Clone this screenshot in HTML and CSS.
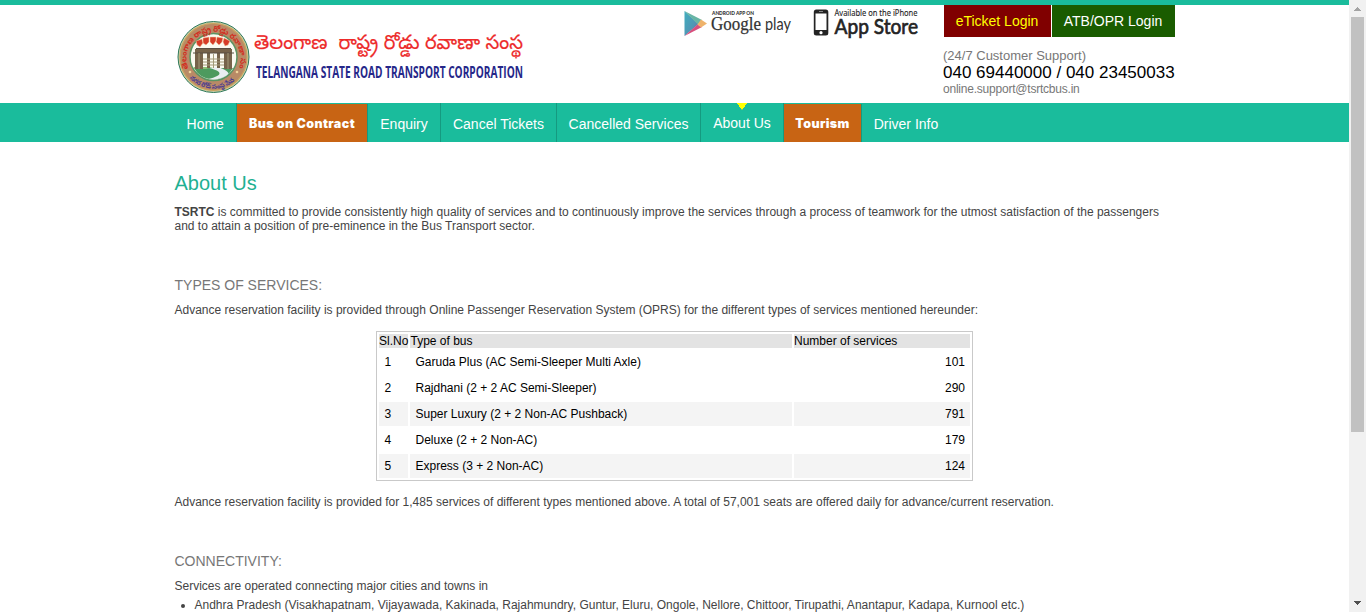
FILE: index.html
```html
<!DOCTYPE html>
<html lang="en">
<head>
<meta charset="utf-8">
<title>TSRTC - About Us</title>
<link rel="stylesheet" href="styles.css">
</head>
<body>
<div class="page">
  <header class="header">
    <div class="wrap header-row">
      <svg class="logo" viewBox="175 15 355 85" width="355" height="85">
        <circle cx="213.500" cy="57" r="35.500" fill="#c9cba3" stroke="#2f7a5c" stroke-width="1"/>
        <circle cx="213.500" cy="57" r="33.500" fill="#b98a66" stroke="#c9a15c" stroke-width="1.200"/>
        <circle cx="213.500" cy="57" r="23.500" fill="#fbfaf0" stroke="#5b9463" stroke-width="1.500"/>
        <defs>
          <path id="arc-top" d="M188.500 69 A27 27 0 1 1 238.500 69"/>
          <path id="arc-bottom" d="M186 73 A32 32 0 0 0 241 73"/>
          <clipPath id="seal"><circle cx="213.500" cy="57" r="22.500"/></clipPath>
        </defs>
        <text class="seal-top"><textPath href="#arc-top" textLength="110">తెలంగాణ రాష్ట్ర రోడ్డు రవాణా సంస్థ</textPath></text>
        <text class="seal-bottom"><textPath href="#arc-bottom" startOffset="6" textLength="50">నగర రోడ్ సంస్థ సేవ</textPath></text>
        <circle cx="190" cy="72" r="1.300" fill="#f0d59c"/><circle cx="237" cy="72" r="1.300" fill="#f0d59c"/>
        <g clip-path="url(#seal)">
          <path d="M190 68 H237 V80 H190Z" fill="#4d9a5e"/>
          <path d="M203 80 C226 76 222 71 209 68 L217 67 C234 71 231 80 218 80Z" fill="#e9eef0"/>
          <path d="M192 69 H206 L213 67 H192Z" fill="#8dbf75"/>
          <path d="M195 49 H232 V53 H195Z M195 53 H203 V69 H195Z M207 53 H210 V68 H207Z M217 53 H220 V68 H217Z M224 53 H232 V69 H224Z" fill="#76634a"/>
          <path d="M193 53 H234 M196 48.500 H231" stroke="#594e42" stroke-width="1.200"/>
          <path d="M203 59 H224 M203 62 H224 M203 65 H224 M199 53 V69 M228 53 V69 M213.500 54 V68" stroke="#a39a78" stroke-width="1"/>
        </g>
        <g fill="#d63c28" stroke="#f2cda0" stroke-width=".5">
          <path d="M196 41 l6-2 1 4 -3 4 -3-2z M203 38 l6-1 0 5 -3 3 -3-2z M210 37 l6 0 0 4 -3 4 -3-3z M217 37 l6 1 -1 4 -3 3 -3-3z M224 38 l6 3 -2 4 -3 1 -2-4z"/>
        </g>
        <text class="logo-telugu" x="254" y="48.500" textLength="269" lengthAdjust="spacingAndGlyphs" xml:space="preserve">తెలంగాణ  రాష్ట్ర రోడ్డు రవాణా సంస్థ</text>
        <text class="logo-english" x="256" y="78" textLength="267" lengthAdjust="spacingAndGlyphs">TELANGANA STATE ROAD TRANSPORT CORPORATION</text>
      </svg>
      <svg class="stores" viewBox="680 5 245 37" width="245" height="37">
        <defs>
          <linearGradient id="play-blue" x1="0" y1="0" x2="1" y2="1"><stop offset="0" stop-color="#40aebe"/><stop offset=".6" stop-color="#5096b5"/><stop offset="1" stop-color="#765d9d"/></linearGradient>
        </defs>
        <path d="M684.500 11 V36 L698.500 24Z" fill="url(#play-blue)"/>
        <path d="M684.500 11 L702 20 L698 24.500Z" fill="#68b5a5"/>
        <path d="M684.500 36 L697.500 24.500 L702 27Z" fill="#d84f7d"/>
        <path d="M697.500 24.500 L701 19.500 L707 23.500 L701 27.500Z" fill="#efb36b"/>
        <text class="play-small" x="712" y="14.500" textLength="42" lengthAdjust="spacingAndGlyphs">ANDROID APP ON</text>
        <text class="play-google" x="711" y="29.500" textLength="50" lengthAdjust="spacingAndGlyphs">Google</text>
        <text class="play-word" x="765" y="29.500" textLength="26" lengthAdjust="spacingAndGlyphs">play</text>
        <rect x="813.800" y="9.500" width="14.500" height="26" rx="2.500" fill="#242424"/>
        <rect x="815.500" y="13.500" width="11" height="16.500" fill="#fff"/>
        <path d="M819 11.500 H823" stroke="#888"/><circle cx="821" cy="32.700" r="1.600" fill="#fff"/>
        <text class="app-small" x="834.500" y="15.700" textLength="83" lengthAdjust="spacingAndGlyphs">Available on the iPhone</text>
        <text class="app-word" x="834.500" y="33.800" textLength="83.500" lengthAdjust="spacingAndGlyphs">App Store</text>
      </svg>
      <div class="account">
        <div class="logins"><a class="login eticket">eTicket Login</a><a class="login atb">ATB/OPR Login</a></div>
        <div class="support">(24/7 Customer Support)</div>
        <div class="phone">040 69440000 / 040 23450033</div>
        <div class="email">online.support@tsrtcbus.in</div>
      </div>
    </div>
  </header>
  <nav class="nav">
    <div class="wrap nav-row">
      <a class="item home">Home</a><a class="item contract hot">Bus on Contract</a><a class="item enquiry">Enquiry</a><a class="item cancel">Cancel Tickets</a><a class="item cancelled">Cancelled Services</a><a class="item about">About Us</a><a class="item tourism hot">Tourism</a><a class="item driver">Driver Info</a>
    </div>
  </nav>
  <main class="wrap content">
    <h1>About Us</h1>
    <p class="intro"><b>TSRTC</b> is committed to provide consistently high quality of services and to continuously improve the services through a process of teamwork for the utmost satisfaction of the passengers<br>and to attain a position of pre-eminence in the Bus Transport sector.</p>
    <h2 class="types">TYPES OF SERVICES:</h2>
    <p class="lead">Advance reservation facility is provided through Online Passenger Reservation System (OPRS) for the different types of services mentioned hereunder:</p>
    <table class="services">
      <colgroup><col class="col-no"><col class="col-type"><col class="col-count"></colgroup>
      <tr class="head"><td>Sl.No</td><td>Type of bus</td><td>Number of services</td></tr>
      <tr><td>1</td><td>Garuda Plus (AC Semi-Sleeper Multi Axle)</td><td>101</td></tr>
      <tr><td>2</td><td>Rajdhani (2 + 2 AC Semi-Sleeper)</td><td>290</td></tr>
      <tr class="shade"><td>3</td><td>Super Luxury (2 + 2 Non-AC Pushback)</td><td>791</td></tr>
      <tr><td>4</td><td>Deluxe (2 + 2 Non-AC)</td><td>179</td></tr>
      <tr class="shade"><td>5</td><td>Express (3 + 2 Non-AC)</td><td>124</td></tr>
    </table>
    <p class="total">Advance reservation facility is provided for 1,485 services of different types mentioned above. A total of 57,001 seats are offered daily for advance/current reservation.</p>
    <h2 class="connect">CONNECTIVITY:</h2>
    <p class="lead">Services are operated connecting major cities and towns in</p>
    <ul><li>Andhra Pradesh (Visakhapatnam, Vijayawada, Kakinada, Rajahmundry, Guntur, Eluru, Ongole, Nellore, Chittoor, Tirupathi, Anantapur, Kadapa, Kurnool etc.)</li></ul>
  </main>
</div>
<div class="scrollbar">
  <svg width="17" height="17" shape-rendering="crispEdges"><path d="M8 7h1v1h1v1h1v1h1v1H5v-1h1V9h1V8h1z" fill="#a3a3a3"/></svg>
  <div class="thumb"></div>
  <svg class="down" width="17" height="17" shape-rendering="crispEdges"><path d="M5 6h7v1h-1v1h-1v1H9v1H8V9H7V8H6V7H5z" fill="#505050"/></svg>
</div>
</body>
</html>
```
FILE: styles.css
```css
* { box-sizing: border-box; }
body { margin: 0; height: 612px; overflow: hidden; display: flex; background: #fff; font-family: "Liberation Sans", Arial, sans-serif; font-size: 12px; color: #444; }
.page { width: 1349px; height: 612px; overflow: hidden; }
.wrap { width: 1000px; margin: 0 auto; }
.header { height: 103px; border-top: 5px solid #1abc9c; }
.header-row { display: flex; align-items: flex-start; }
.logo { margin: 10px 0 0 .5px; flex: none; overflow: visible; }
.stores { margin-left: 150px; flex: none; overflow: visible; }
.account { margin-left: 18px; width: 232px; flex: none; white-space: nowrap; }
.logins { display: flex; gap: 1px; margin-left: .5px; }
.login { height: 32px; line-height: 32px; font-size: 14px; text-align: center; }
.eticket { width: 107px; background: #800000; color: #ff0; }
.atb { width: 123px; background: #1a5c00; color: #fff; }
.support { margin-top: 11px; height: 15px; line-height: 15px; font-size: 13px; color: #777; }
.phone { height: 19px; line-height: 19px; font-size: 17px; color: #000; }
.email { height: 14px; line-height: 14px; letter-spacing: -.22px; color: #777; }
.logo-telugu { font: 20px "Noto Sans Telugu", "Noto Sans", sans-serif; fill: #ed2b2b; stroke: #ed2b2b; stroke-width: .2px; }
.logo-english { font: bold 16px "Open Sans", sans-serif; fill: #252789; }
.seal-top { font: bold 8px "Noto Sans Telugu", sans-serif; fill: #d12f22; }
.seal-bottom { font: bold 6.5px "Noto Sans Telugu", sans-serif; fill: #493b91; }
.play-small { font: 900 4.8px Lato, sans-serif; fill: #333; }
.play-google { font: 19px "Liberation Serif", serif; fill: #333; stroke: #333; stroke-width: .25px; }
.play-word { font: 17px Lato, sans-serif; fill: #333; }
.app-small { font: 8px "Noto Sans", sans-serif; fill: #222; stroke: #222; stroke-width: .1px; }
.app-word { font: 20.5px Lato, sans-serif; fill: #242424; stroke: #242424; stroke-width: .65px; }
.nav { height: 39px; background: #1abc9c; }
.nav-row { display: flex; padding-left: .5px; }
.item { height: 39px; line-height: 42px; font-size: 14px; color: #fff; text-align: center; border-right: 1px solid #159a80; white-space: nowrap; flex: none; }
.hot { height: 38px; margin-top: 1px; font: 900 12.5px/40px Inter, sans-serif; letter-spacing: .4px; background: #c86414; }
.home { width: 61.5px; margin-right: .5px; }
.contract { width: 131px; }
.enquiry { width: 73px; }
.cancel { width: 116px; }
.cancelled { width: 144px; }
.about { width: 83px; line-height: 40px; background: linear-gradient(to bottom right, #ff0 50%, transparent 52%) 41px 0 / 5px 7px no-repeat, linear-gradient(to bottom left, #ff0 50%, transparent 52%) 36px 0 / 5px 7px no-repeat; }
.tourism { width: 78px; }
.driver { width: 88px; border: 0; }
h1 { margin: 0; padding-top: 29px; height: 63px; line-height: 24px; font-size: 20px; font-weight: normal; color: #1fb092; }
p { margin: 0; line-height: 14px; white-space: nowrap; }
h2 { margin: 0; height: 17px; line-height: 17px; font-size: 14px; font-weight: normal; color: #777; }
.types { margin-top: 44px; }
.lead { margin-top: 9px; }
.services { width: 597px; height: 150px; margin: 14px auto 14px 201.5px; border: 1px solid #c9c9c9; border-collapse: separate; border-spacing: 2px; table-layout: fixed; color: #000; }
.col-no { width: 29px; }
.col-type { width: 382px; }
.services td { height: 24px; padding: 0 5px 0 5.5px; line-height: 14px; white-space: nowrap; }
.services .head td { height: 14px; padding: 0; background: #e3e3e3; }
.services .head td:nth-child(2) { padding-left: .5px; }
.services tr:not(.head) td:last-child { text-align: right; }
.shade td { background: #f4f4f4; }
.connect { margin-top: 44px; }
ul { margin: 5px 0 0; padding-left: 20px; line-height: 14px; white-space: nowrap; }
.scrollbar { width: 17px; height: 612px; background: #f1f1f1; display: flex; flex-direction: column; flex: none; }
.scrollbar svg { display: block; flex: none; }
.thumb { height: 415px; width: 13px; margin-left: 2px; background: #c1c1c1; }
.down { margin-top: auto; }
```
